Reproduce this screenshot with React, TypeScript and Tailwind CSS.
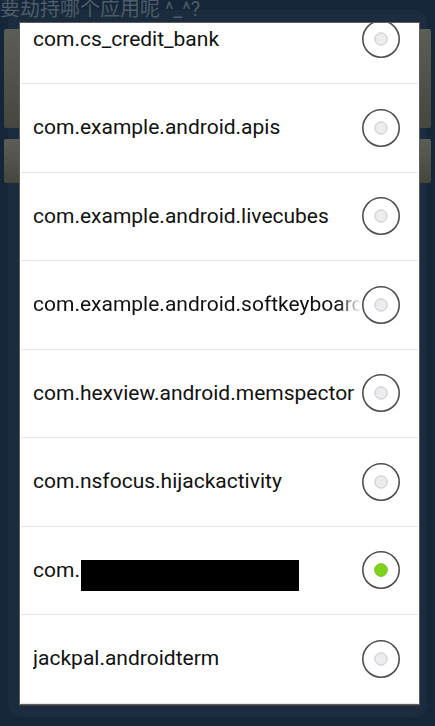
import React from 'react';

type AppItem = {
    name: string;
    checked?: boolean;
    redacted?: boolean;
    fade?: boolean;
};

const items: AppItem[] = [
    { name: 'com.cs_credit_bank' },
    { name: 'com.example.android.apis' },
    { name: 'com.example.android.livecubes' },
    { name: 'com.example.android.softkeyboard', fade: true },
    { name: 'com.hexview.android.memspector' },
    { name: 'com.nsfocus.hijackactivity' },
    { name: 'com.', checked: true, redacted: true },
    { name: 'jackpal.androidterm' },
];

const Radio: React.FC<{ checked?: boolean }> = ({ checked }) => (
    <svg width="40" height="40" viewBox="0 0 40 40" className="shrink-0">
        <circle cx="20" cy="20" r="18.2" fill="#ffffff" stroke="#4f4f4f" strokeWidth="1.6" />
        {checked ? (
            <circle cx="20" cy="20" r="6.4" fill="#7fd41b" stroke="#6cb814" strokeWidth="0.8" />
        ) : (
            <circle cx="20" cy="20" r="6.2" fill="#ececee" stroke="#bdbdbf" strokeWidth="0.8" />
        )}
    </svg>
);

const App: React.FC = () => {
    return (
        <div className="relative w-[435px] h-[726px] overflow-hidden bg-[#15263a] font-['Roboto','Noto_Sans_CJK_SC',sans-serif]">
            {/* dim panel behind the dialog */}
            <div className="absolute left-[8px] right-[8px] top-[10px] bottom-[9px] rounded-[12px] bg-[#1a2c3e]" />

            {/* the activity underneath */}
            <div className="relative">
                <div className="-mt-[3px] text-[20px] leading-[24px] text-[#4d5c66] whitespace-nowrap">
                    要劫持哪个应用呢 ^_^?
                </div>
                <div className="mx-[4px] mt-[8px] h-[99px] rounded-[2px] bg-gradient-to-b from-[#5b5d57] to-[#45473f]" />
                <div className="mx-[4px] mt-[11px] h-[44px] rounded-[2px] bg-gradient-to-b from-[#5b5d57] to-[#45473f]" />
            </div>

            {/* dialog */}
            <div className="absolute left-[19px] top-[22px] w-[401px] h-[683px] overflow-hidden bg-white border border-[#5e5e5e] shadow-[0_1px_0_#3a3a3a]">
                <div className="-mt-[27.5px]">
                    {items.map((item) => (
                        <div key={item.name} className="border-b border-[#e6e6e6] mx-[1px]">
                            <div className="h-[87.5px] flex items-center pl-[12px] pr-[17px]">
                                <div
                                    className={
                                        item.fade
                                            ? 'flex-1 min-w-0 overflow-hidden whitespace-nowrap text-[21px] text-[#111] [mask-image:linear-gradient(to_right,black_calc(100%-22px),transparent)]'
                                            : 'flex-1 min-w-0 overflow-hidden whitespace-nowrap text-[21px] text-[#111]'
                                    }
                                >
                                    {item.redacted ? (
                                        <div className="flex items-center">
                                            <span>{item.name}</span>
                                            <span className="ml-[1px] mt-[11px] w-[218px] h-[31px] bg-black" />
                                        </div>
                                    ) : (
                                        item.name
                                    )}
                                </div>
                                <Radio checked={item.checked} />
                            </div>
                        </div>
                    ))}
                </div>
            </div>
        </div>
    );
};

export default App;
